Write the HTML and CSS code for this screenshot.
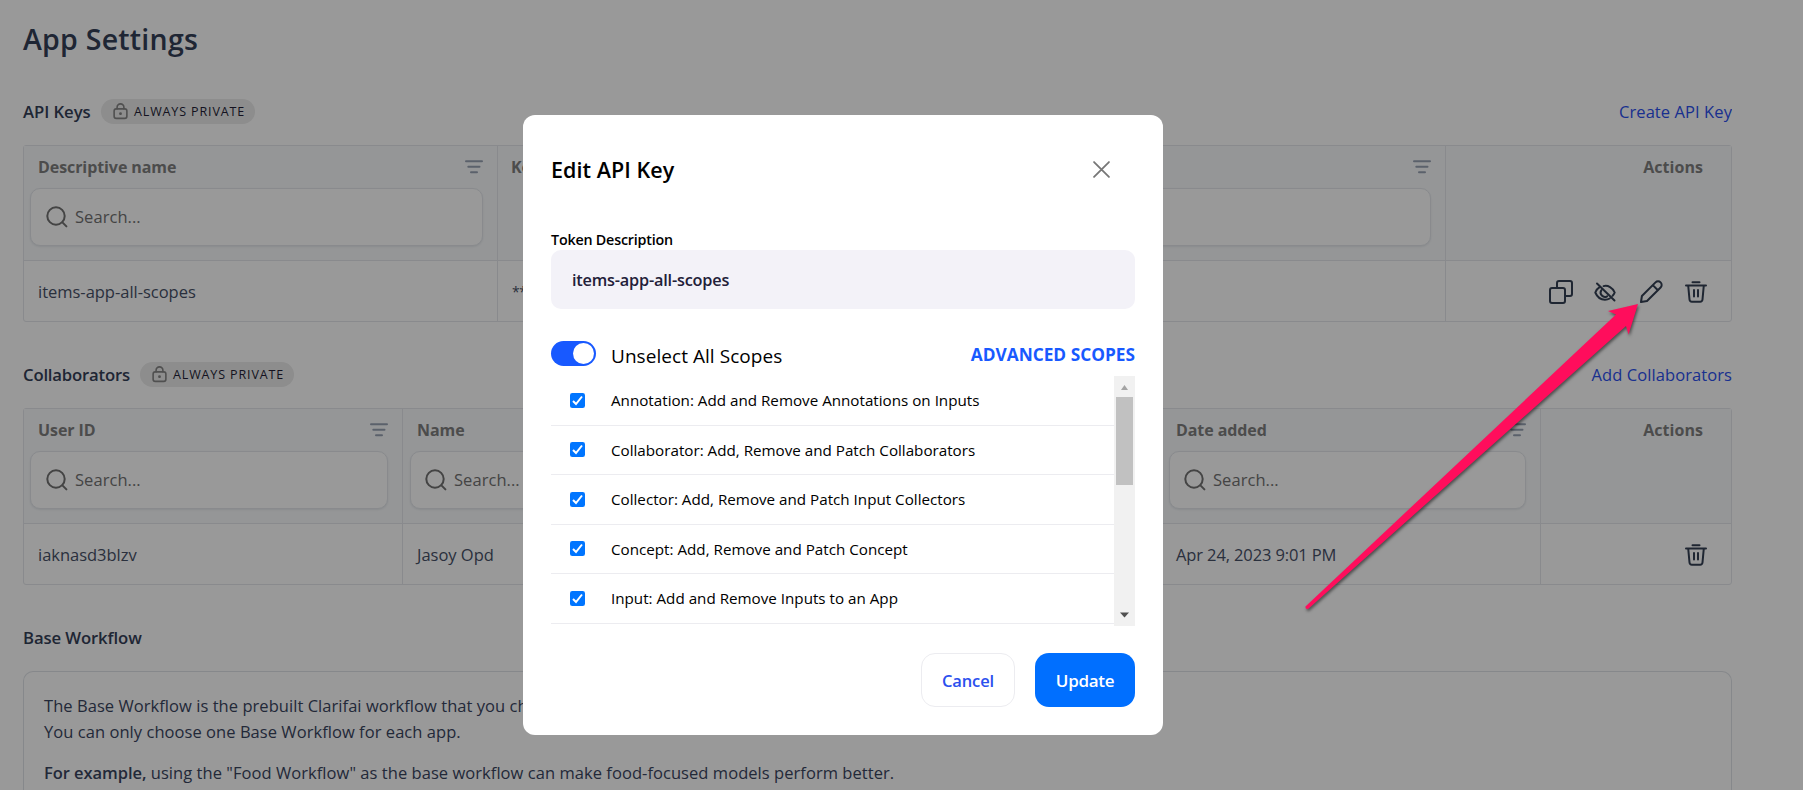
FILE: index.html
```html
<!DOCTYPE html>
<html lang="en">
<head>
<meta charset="utf-8">
<title>App Settings</title>
<link rel="stylesheet" href="styles.css">
</head>
<body>
<svg class="sprite" aria-hidden="true">
  <symbol id="lock" viewBox="0 0 14 16"><rect x="1" y="5.5" width="12" height="9" rx="2"/><path d="M3.8 5.500V4a3.200 3.200 0 0 1 6.400 0v1.500"/><circle cx="7" cy="10" r=".6" fill="currentColor"/></symbol>
  <symbol id="filter" viewBox="0 0 18 14"><path d="M1 1.200h16M3.300 6.800h11.200M6 12.300h6"/></symbol>
  <symbol id="search" viewBox="0 0 22 22"><circle cx="10" cy="10" r="8.700"/><path d="M16.400 16.400l4 4"/></symbol>
  <symbol id="copy" viewBox="0 0 24 24"><rect x="1" y="8" width="15" height="15" rx="2"/><path d="M8 8V3a2 2 0 0 1 2-2h11a2 2 0 0 1 2 2v11a2 2 0 0 1-2 2h-5"/></symbol>
  <symbol id="eye" viewBox="0 0 22 20"><path d="M3 1.500l17.500 17M5.600 5.200C3.800 6.300 2.300 8 1.300 10.500 3.200 15 6.800 17.700 11 17.700c1.700 0 3.300-.4 4.700-1.200M9.500 4.100C14 3 18.700 5.500 20.700 10.500c-.5 1.300-1.200 2.400-2.100 3.300M7.300 8.300a4.300 4.300 0 0 0 5.800 6"/></symbol>
  <symbol id="pencil" viewBox="0 0 24 24"><path d="M2 22l.9-6L16.500 2.400a3.600 3.600 0 0 1 5.100 5.100L8 21zM13.800 5.100l5.100 5.100"/></symbol>
  <symbol id="trash" viewBox="0 0 22 22"><path d="M1 4.500h20M7.500 1.200h7M3.200 4.500l1.300 14a2.400 2.400 0 0 0 2.400 2.200h8.200a2.400 2.400 0 0 0 2.400-2.200l1.300-14M9 9v6.500M13 9v6.500"/></symbol>
</svg>

<main class="page">
  <h1 class="page-title">App Settings</h1>

  <section class="section">
    <header class="section-head">
      <h2 class="section-title keys-title">API Keys</h2>
      <span class="badge"><svg class="lock"><use href="#lock"/></svg><span>ALWAYS PRIVATE</span></span>
      <a class="section-link">Create API Key</a>
    </header>
    <div class="table keys-table">
      <div class="th"><div class="th-top"><span>Descriptive name</span><svg class="filter"><use href="#filter"/></svg></div><div class="search"><svg><use href="#search"/></svg><span>Search...</span></div></div>
      <div class="th th-plain"><div class="th-top"><span>Key</span></div></div>
      <div class="th"><div class="th-top"><span></span><svg class="filter"><use href="#filter"/></svg></div><div class="search"></div></div>
      <div class="th th-last"><div class="th-top"><span>Actions</span></div></div>
      <div class="td">items-app-all-scopes</div>
      <div class="td mask">**</div>
      <div class="td"></div>
      <div class="td td-last">
        <svg class="i-copy"><use href="#copy"/></svg>
        <svg class="i-eye"><use href="#eye"/></svg>
        <svg class="i-pencil"><use href="#pencil"/></svg>
        <svg class="i-trash"><use href="#trash"/></svg>
      </div>
    </div>
  </section>

  <section class="section">
    <header class="section-head">
      <h2 class="section-title collab-title">Collaborators</h2>
      <span class="badge"><svg class="lock"><use href="#lock"/></svg><span>ALWAYS PRIVATE</span></span>
      <a class="section-link">Add Collaborators</a>
    </header>
    <div class="table collab-table">
      <div class="th"><div class="th-top"><span>User ID</span><svg class="filter"><use href="#filter"/></svg></div><div class="search"><svg><use href="#search"/></svg><span>Search...</span></div></div>
      <div class="th"><div class="th-top"><span>Name</span><svg class="filter"><use href="#filter"/></svg></div><div class="search"><svg><use href="#search"/></svg><span>Search...</span></div></div>
      <div class="th"><div class="th-top"></div><div class="search"></div></div>
      <div class="th"><div class="th-top"><span>Date added</span><svg class="filter"><use href="#filter"/></svg></div><div class="search"><svg><use href="#search"/></svg><span>Search...</span></div></div>
      <div class="th th-last"><div class="th-top"><span>Actions</span></div></div>
      <div class="td">iaknasd3blzv</div>
      <div class="td">Jasoy Opd</div>
      <div class="td"></div>
      <div class="td date">Apr 24, 2023 9:01 PM</div>
      <div class="td td-last"><svg class="i-trash"><use href="#trash"/></svg></div>
    </div>
  </section>

  <section class="section">
    <header class="section-head"><h2 class="section-title base-title">Base Workflow</h2></header>
    <div class="card">
      <p>The Base Workflow is the prebuilt Clarifai workflow that you ch<br>You can only choose one Base Workflow for each app.</p>
      <p><b>For example,</b> using the "Food Workflow" as the base workflow can make food-focused models perform better.</p>
    </div>
  </section>
</main>

<div class="overlay">
  <div class="modal">
    <header class="modal-head">
      <h3>Edit API Key</h3>
      <svg class="close" viewBox="0 0 16 16"><path d="M1 1l14 14M15 1L1 15"/></svg>
    </header>
    <label class="field-label">Token Description</label>
    <div class="field">items-app-all-scopes</div>
    <div class="scope-head">
      <span class="toggle"><span class="knob"></span></span>
      <span class="toggle-label">Unselect All Scopes</span>
      <a class="advanced">ADVANCED SCOPES</a>
    </div>
    <div class="list">
      <div class="rows">
        <div class="row"><svg class="check" viewBox="0 0 15 15"><rect width="15" height="15" rx="2.300"/><path d="M3 8l3 3 6-7.500"/></svg><span>Annotation: Add and Remove Annotations on Inputs</span></div>
        <div class="row"><svg class="check" viewBox="0 0 15 15"><rect width="15" height="15" rx="2.300"/><path d="M3 8l3 3 6-7.500"/></svg><span>Collaborator: Add, Remove and Patch Collaborators</span></div>
        <div class="row"><svg class="check" viewBox="0 0 15 15"><rect width="15" height="15" rx="2.300"/><path d="M3 8l3 3 6-7.500"/></svg><span>Collector: Add, Remove and Patch Input Collectors</span></div>
        <div class="row"><svg class="check" viewBox="0 0 15 15"><rect width="15" height="15" rx="2.300"/><path d="M3 8l3 3 6-7.500"/></svg><span>Concept: Add, Remove and Patch Concept</span></div>
        <div class="row"><svg class="check" viewBox="0 0 15 15"><rect width="15" height="15" rx="2.300"/><path d="M3 8l3 3 6-7.500"/></svg><span>Input: Add and Remove Inputs to an App</span></div>
      </div>
      <div class="scrollbar">
        <svg class="sb-up" viewBox="0 0 21 21"><path d="M7 14h7l-3.500-5z"/></svg>
        <div class="thumb"></div>
        <svg class="sb-down" viewBox="0 0 21 21"><path d="M6 7.500h9l-4.500 5z"/></svg>
      </div>
    </div>
    <footer class="buttons">
      <button class="cancel">Cancel</button>
      <button class="update">Update</button>
    </footer>
  </div>
</div>

<svg class="arrow" viewBox="0 0 1803 790">
  <path d="M1638 304L1608 311L1616 314.500L1305.500 606.500Q1305 609 1308 609L1626 326L1628.500 334.500Z"/>
</svg>
</body>
</html>
```

FILE: styles.css
```css
* { box-sizing: border-box; }
body {
  margin: 0;
  height: 790px;
  overflow: hidden;
  position: relative;
  background: #fff;
  font-family: "Open Sans", "Noto Sans", sans-serif;
  color: #344054;
}
h1, h2, h3, p { margin: 0; }
.sprite { display: none; }
svg { display: block; flex: none; fill: none; stroke: currentColor; stroke-width: 2; stroke-linecap: round; stroke-linejoin: round; }

.page { width: 1732px; height: 790px; overflow: hidden; padding: 19px 0 0 23px; }
.page-title { font-size: 28.500px; line-height: 40px; font-weight: 600; letter-spacing: .25px; color: #344058; }
.section { padding-top: 38px; }
.section-head { display: flex; align-items: center; height: 30px; }
.section-title { font-size: 16.700px; line-height: 24px; font-weight: 600; letter-spacing: -.18px; color: #344058; white-space: nowrap; }
.keys-title { width: 68px; letter-spacing: -.05px; }
.collab-title { width: 107px; }
.base-title { letter-spacing: -.1px; }
.badge { display: flex; align-items: center; height: 25px; width: 154px; margin: 0 0 1px 10px; padding-left: 12px; gap: 6px; border-radius: 13px; background: #ebebeb; font-size: 12.500px; letter-spacing: .87px; color: #241f36; white-space: nowrap; }
.lock { width: 15px; height: 17px; color: #858585; stroke-width: 1.500; }
.section-link { margin-left: auto; font-size: 16.500px; line-height: 24px; letter-spacing: .08px; color: #2b50ee; }

.table { display: grid; grid-template-rows: 115px 60px; height: 177px; margin-top: 18px; border: 1px solid #e4e7ec; border-radius: 3px; }
.keys-table { grid-template-columns: 474px 474px 474px 1fr; }
.collab-table { grid-template-columns: 379px 379px 380px 379px 1fr; }
.th { padding: 7px 14px 0 7px; background: #f8fafc; border-right: 1px solid #e4e7ec; border-bottom: 1px solid #e4e7ec; }
.th:first-child { padding-left: 6px; }
.th:first-child .th-top { padding-left: 8px; }
.th-plain .th-top { padding-left: 6px; }
.th-top { display: flex; align-items: center; justify-content: space-between; height: 27px; padding: 0 0 0 7px; font-size: 16px; font-weight: 700; letter-spacing: -.08px; color: #7f7f7f; }
.filter { width: 18px; height: 14px; color: #98a2b3; }
.search { display: flex; align-items: center; gap: 7px; height: 58px; margin-top: 8px; padding: 0 0 1px 15px; border: 1px solid #e4e7ec; border-radius: 10px; background: #fff; box-shadow: 0 1px 2px rgba(16, 24, 40, .08); font-size: 16.500px; letter-spacing: .05px; color: #727272; }
.th:not(:first-child) .search { padding-left: 14px; }
.search svg { width: 22px; height: 22px; }
.th-last, .td-last { border-right: 0; }
.th-last .th-top { justify-content: flex-end; padding-right: 14px; letter-spacing: .05px; }
.td { display: flex; align-items: center; padding-left: 14px; border-right: 1px solid #e4e7ec; font-size: 16.500px; letter-spacing: -.02px; color: #475067; }
.td.mask { font-size: 14px; letter-spacing: -.5px; }
.td.date { letter-spacing: -.12px; }
.td.td-last { justify-content: flex-end; border-right: 0; padding: 1px 24px 0 0; color: #344054; }
.i-copy { width: 24px; height: 24px; margin-right: 21px; }
.i-eye { width: 22px; height: 20px; margin-right: 23px; }
.i-pencil { width: 24px; height: 24px; margin-right: 22px; }
.i-trash { width: 22px; height: 22px; }

.card { height: 119px; margin-top: 18px; padding: 21px 20px 0; border: 1px solid #e0e3e8; border-bottom: 0; border-radius: 10px 10px 0 0; font-size: 16.500px; line-height: 26px; letter-spacing: .05px; color: #3a4560; white-space: nowrap; }
.card p + p { margin-top: 15px; }
.card b { font-weight: 600; letter-spacing: -.05px; }

.overlay { position: absolute; inset: 0; background: rgba(0, 0, 0, .4); }
.modal { position: absolute; left: 523px; top: 115px; width: 640px; height: 620px; padding: 34px 28px 0; border-radius: 12px; background: #fff; color: #000; }
.modal-head { display: flex; justify-content: space-between; align-items: center; height: 40px; padding-right: 25px; }
.modal-head h3 { font-size: 21.500px; font-weight: 600; letter-spacing: .05px; }
.close { width: 17px; height: 17px; color: #777; stroke-width: 1.700; }
.field-label { display: block; margin-top: 40px; height: 21px; font-size: 14.300px; line-height: 22px; font-weight: 600; letter-spacing: -.2px; }
.field { height: 59px; padding-left: 21px; border-radius: 10px; background: #f3f2f8; font-size: 16.300px; line-height: 60px; font-weight: 600; letter-spacing: -.2px; color: #222038; }
.scope-head { display: flex; align-items: center; height: 67px; }
.toggle { display: flex; justify-content: flex-end; width: 45px; height: 25px; padding: 2px; margin-top: 32px; border-radius: 13px; background: #1859ff; align-self: flex-start; }
.knob { width: 21px; height: 21px; border-radius: 50%; background: #fff; }
.toggle-label { margin: 26px 0 0 15px; font-size: 19px; line-height: 24px; letter-spacing: .05px; }
.advanced { margin: 24px 0 0 auto; font-size: 17.300px; line-height: 24px; font-weight: 700; letter-spacing: 0; color: #1859ff; }
.list { display: flex; height: 250px; }
.rows { flex: 1; display: grid; grid-template-rows: repeat(5, 49.500px); }
.row { display: flex; align-items: center; gap: 26px; padding-left: 19px; border-bottom: 1px solid #ececf0; font-size: 15.200px; letter-spacing: 0; }
.check { width: 15px; height: 15px; stroke: none; }
.check rect { fill: #0075ff; }
.check path { stroke: #fff; stroke-linecap: butt; stroke-linejoin: miter; }
.scrollbar { display: flex; flex-direction: column; align-items: center; width: 21px; background: #f1f1f1; }
.scrollbar svg { width: 21px; height: 21px; stroke: none; }
.scrollbar .sb-up { fill: #a3a3a3; }
.scrollbar .sb-down { fill: #505050; margin-top: auto; }
.thumb { width: 17px; height: 88px; background: #c1c1c1; }
.buttons { display: flex; justify-content: flex-end; gap: 20px; margin-top: 27px; }
.buttons button { height: 54px; padding: 0; border-radius: 14px; font-family: inherit; font-size: 17px; letter-spacing: -.3px; }
.buttons .cancel { width: 94px; border: 1px solid #ececf0; background: #fff; color: #2b50ee; font-size: 16.500px; font-weight: 600; letter-spacing: -.1px; }
.buttons .update { width: 100px; border: 0; background: #006fff; color: #fff; font-weight: 600; }

.arrow { position: absolute; inset: 0; width: 1803px; height: 790px; fill: #ff0d5c; stroke: none; filter: drop-shadow(1px 2px 1.500px rgba(0, 0, 0, .5)); }
```
